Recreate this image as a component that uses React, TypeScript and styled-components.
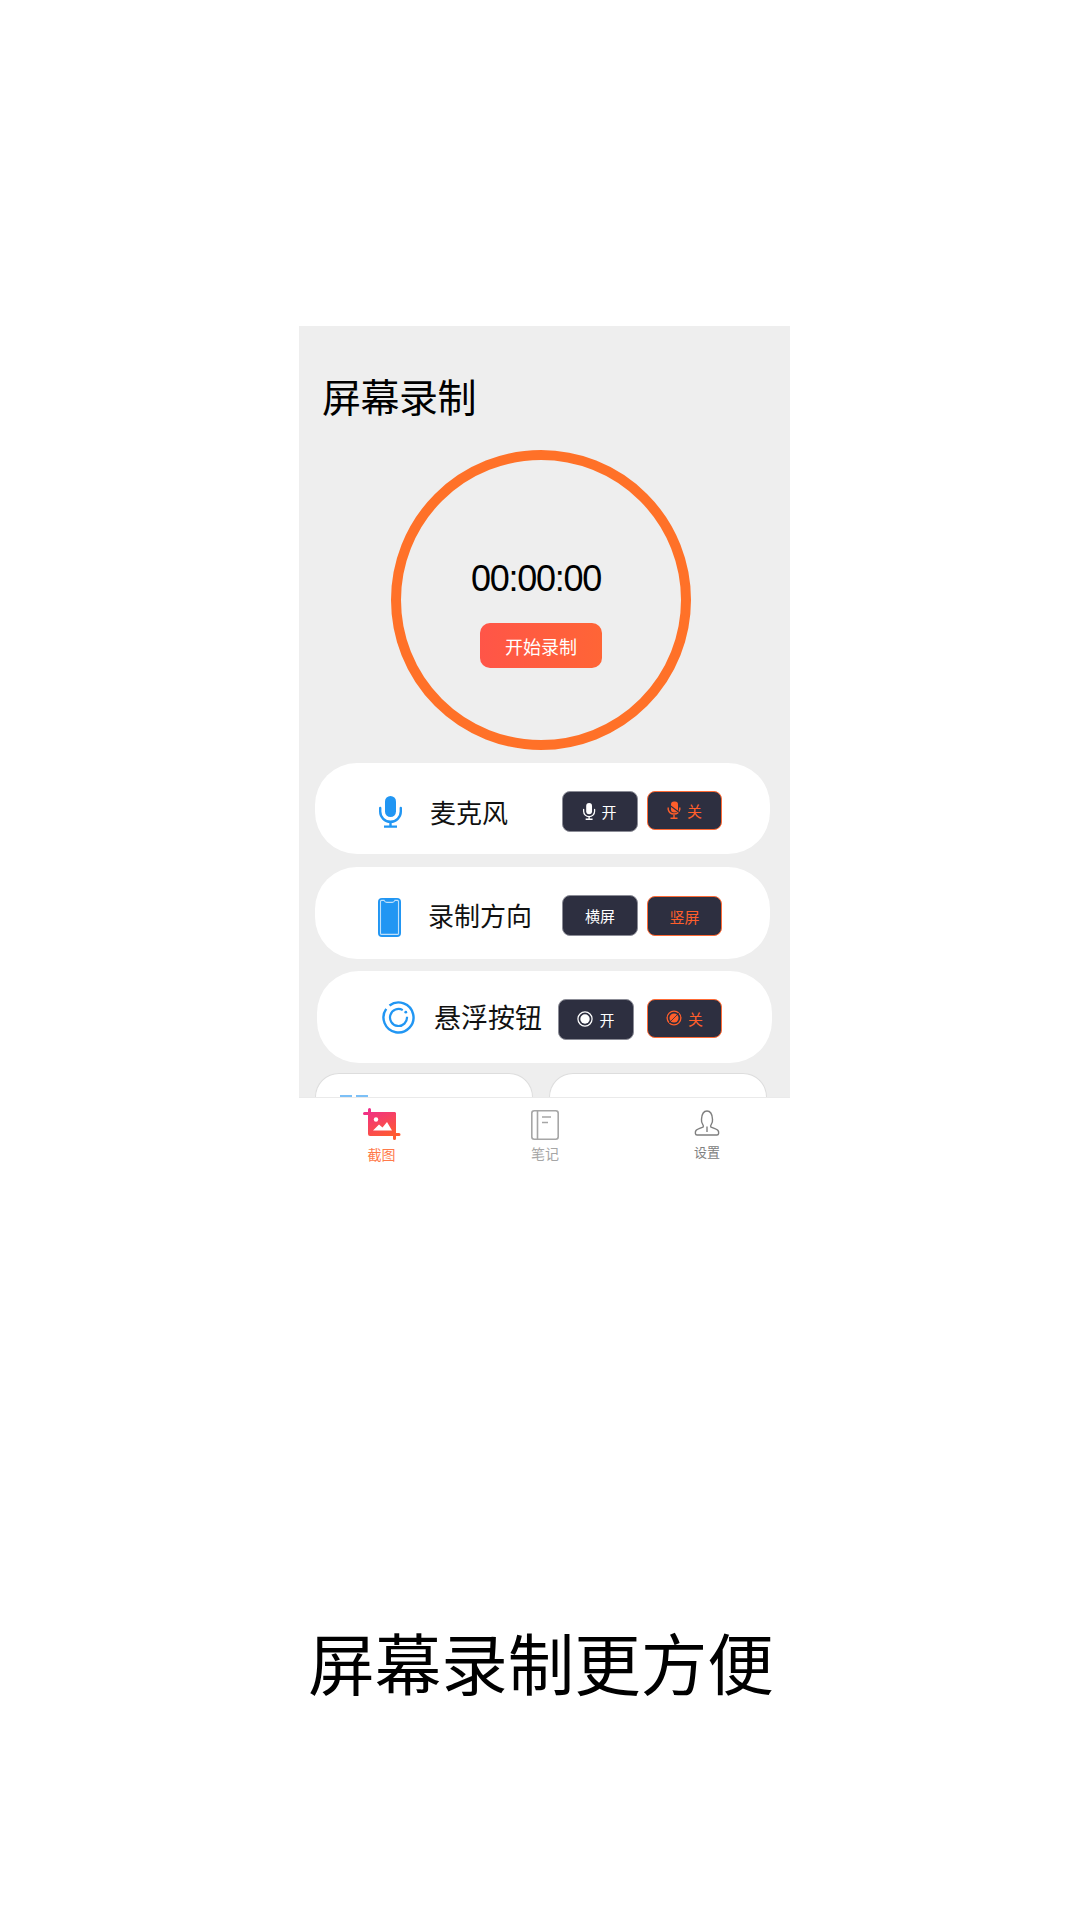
import React from "react";
import styled, { createGlobalStyle } from "styled-components";

const GlobalStyle = createGlobalStyle`
  html, body {
    margin: 0;
    padding: 0;
    background: #fff;
    font-family: "Liberation Sans", "Noto Sans CJK SC", sans-serif;
  }
`;

const Page = styled.div`
  width: 1080px;
  height: 1920px;
  padding: 326px 0 0 299px;
  box-sizing: border-box;
  display: flex;
  flex-direction: column;
  position: relative;
`;

const Phone = styled.div`
  width: 491px;
  display: flex;
  flex-direction: column;
`;

const Content = styled.div`
  height: 771px;
  background: #eee;
  overflow: hidden;
  display: flex;
  flex-direction: column;

  & > * {
    flex-shrink: 0;
  }
`;

const Title = styled.h1`
  margin: 41px 0 0 23px;
  font-size: 39px;
  line-height: 56px;
  font-weight: 400;
  color: #000;
  font-family: "Noto Sans CJK SC", sans-serif;
  letter-spacing: -0.5px;
`;

const Ring = styled.div`
  width: 300px;
  height: 300px;
  margin: 27px 0 0 92px;
  border: 10px solid #ff7128;
  border-radius: 50%;
  box-sizing: border-box;
  display: flex;
  flex-direction: column;
  align-items: center;
`;

const Time = styled.div`
  margin: 99px 10px 0 0;
  font-size: 36px;
  line-height: 40px;
  color: #000;
  letter-spacing: -1.25px;
`;

const StartButton = styled.div`
  width: 122px;
  height: 45px;
  margin-top: 24px;
  border-radius: 10px;
  background: linear-gradient(90deg, #ff5548, #ff6536);
  color: #fff;
  font-size: 18px;
  font-family: "Noto Sans CJK SC", sans-serif;
  display: flex;
  align-items: center;
  justify-content: center;
`;

const Rows = styled.div`
  display: flex;
  flex-direction: column;
  margin-top: 13px;
`;

const Row = styled.div<{ $left: number; $top: number; $height: number; $pad: number; $after: number; $right: number }>`
  width: 455px;
  height: ${(p) => p.$height}px;
  margin: 0 0 ${(p) => p.$after}px ${(p) => p.$left}px;
  padding: ${(p) => p.$top}px ${(p) => p.$right}px 0 ${(p) => p.$pad}px;
  box-sizing: border-box;
  background: #fff;
  border-radius: 42px;
  display: flex;
  align-items: center;
`;

const RowIcon = styled.div<{ $width: number }>`
  width: ${(p) => p.$width}px;
  display: flex;
  justify-content: center;
  flex-shrink: 0;
`;

const RowLabel = styled.div<{ $size: number; $gap: number; $lift?: number }>`
  margin-left: ${(p) => p.$gap}px;
  margin-bottom: ${(p) => p.$lift ?? 0}px;
  font-size: ${(p) => p.$size}px;
  line-height: 36px;
  color: #111;
  font-family: "Noto Sans CJK SC", sans-serif;
  white-space: nowrap;
`;

const Toggles = styled.div<{ $gap: number; $shift: number }>`
  margin-left: auto;
  display: flex;
  align-items: flex-start;
  gap: ${(p) => p.$gap}px;
  transform: translateY(${(p) => p.$shift}px);
`;

const Toggle = styled.div<{ $off?: boolean; $tall?: boolean }>`
  width: ${(p) => (p.$off ? 75 : 76)}px;
  height: ${(p) => (p.$off ? (p.$tall ? 40 : 39) : 41)}px;
  margin-top: ${(p) => (p.$tall ? 1 : 0)}px;
  box-sizing: border-box;
  border-radius: 8px;
  background: #2d2f40;
  border: 1px solid ${(p) => (p.$off ? "#ff6a35" : "#8b8c96")};
  color: ${(p) => (p.$off ? "#ff5e2b" : "#fff")};
  font-size: 15px;
  font-family: "Noto Sans CJK SC", sans-serif;
  display: flex;
  align-items: center;
  justify-content: center;
  gap: 6px;
`;

const Cards = styled.div`
  display: flex;
  gap: 16px;
  margin: 10px 0 0 16px;
`;

const Card = styled.div`
  width: 218px;
  height: 120px;
  box-sizing: border-box;
  background: #fff;
  border: 1px solid #ddd;
  border-bottom: 0;
  border-radius: 24px 24px 0 0;
  padding: 21px 0 0 24px;
  display: flex;
  gap: 4px;
  align-items: flex-start;
`;

const CardMark = styled.span`
  width: 12px;
  height: 3px;
  background: #7cc0f7;
`;

const TabBar = styled.div`
  height: 76px;
  background: #fff;
  border-top: 1px solid #eaeaea;
  box-sizing: border-box;
  display: grid;
  grid-template-columns: 165px 162px 162px;
`;

const Tab = styled.div<{ $color: string; $size: number; $top: number; $gap: number }>`
  display: flex;
  flex-direction: column;
  align-items: center;
  padding-top: ${(p) => p.$top}px;
  gap: ${(p) => p.$gap}px;
  color: ${(p) => p.$color};
  font-size: ${(p) => p.$size}px;
  line-height: 18px;
  font-family: "Noto Sans CJK SC", sans-serif;

  svg {
    display: block;
  }
`;

const Caption = styled.div`
  position: absolute;
  left: 2px;
  right: 0;
  top: 1616px;
  text-align: center;
  font-size: 66.5px;
  line-height: 90px;
  color: #000;
  font-family: "Noto Sans CJK SC", sans-serif;
`;

const MicIcon: React.FC<{ size?: number; color: string }> = ({ size = 32, color }) => (
  <svg width={(size * 23) / 32} height={size} viewBox="0 0 23 32" fill="none">
    <rect x="6" y="0" width="11" height="21" rx="5.5" fill={color} />
    <path d="M1.2 12v3.5a10.3 10.3 0 0 0 20.6 0V12" stroke={color} strokeWidth="2.4" strokeLinecap="round" />
    <path d="M11.5 25.5v5M5 30.6h13" stroke={color} strokeWidth="2.4" />
  </svg>
);

const MicOffIcon: React.FC<{ color: string }> = ({ color }) => (
  <svg width="14" height="18" viewBox="0 0 14 18" fill="none">
    <rect x="4" y="0.5" width="7" height="11" rx="3" fill={color} />
    <path d="M1.2 6.5v2a6 6 0 0 0 11.6 0v-2M7 14v3.5M3.5 17.3h7" stroke={color} strokeWidth="1.4" />
    <path d="M1 3l12 9" stroke="#2d2f40" strokeWidth="1.1" />
  </svg>
);

const PhoneIcon: React.FC = () => (
  <svg width="23" height="39" viewBox="0 0 23 39" fill="none">
    <rect x="0" y="0" width="23" height="39" rx="4" fill="#2196f3" />
    <path
      d="M3.5 2.4h2.6c.6 1.4 1.4 2 2.6 2h5.6c1.2 0 2-.6 2.6-2h2.6c.6 0 1 .4 1 1v32c0 .6-.4 1-1 1H3.5c-.6 0-1-.4-1-1v-32c0-.6.4-1 1-1z"
      stroke="#bfe0fb"
      strokeWidth="1.1"
    />
  </svg>
);

const FloatIcon: React.FC = () => (
  <svg width="33" height="33" viewBox="0 0 33 33" fill="none">
    <path d="M7.47 4.52A15 15 0 1 1 4.21 7.9" stroke="#2196f3" strokeWidth="2.4" />
    <path d="M20.75 9.14A8.5 8.5 0 1 0 24.97 15.76" stroke="#2196f3" strokeWidth="2.2" />
    <circle cx="23.8" cy="11.2" r="1.4" fill="#2196f3" />
  </svg>
);

const DotIcon: React.FC = () => (
  <svg width="16" height="16" viewBox="0 0 17 17" fill="none">
    <circle cx="8.5" cy="8.5" r="7.5" stroke="#fff" strokeWidth="1.3" />
    <circle cx="8.5" cy="8.5" r="5" fill="#fff" />
  </svg>
);

const DotOffIcon: React.FC = () => (
  <svg width="16" height="16" viewBox="0 0 17 17" fill="none">
    <circle cx="8.5" cy="8.5" r="7.3" stroke="#ff5e2b" strokeWidth="1.4" />
    <circle cx="8.5" cy="8.5" r="4.8" fill="#ff5e2b" />
    <path d="M1.5 15.5L15.5 1.5" stroke="#2d2f40" strokeWidth="0.9" />
  </svg>
);

const CropIcon: React.FC = () => (
  <svg width="38" height="32" viewBox="0 0 38 32" fill="none">
    <defs>
      <linearGradient id="cropFill" x1="0" y1="0" x2="0.5" y2="1">
        <stop offset="0" stopColor="#ee2a94" />
        <stop offset="1" stopColor="#ff5a30" />
      </linearGradient>
    </defs>
    <path
      d="M5 1.5a1.5 1.5 0 0 1 3 0V4h24a2 2 0 0 1 1 1v20h3a1.5 1.5 0 0 1 0 3h-3v2.5a1.5 1.5 0 0 1-3 0V28H7a2 2 0 0 1-2-2V7H1.5a1.5 1.5 0 0 1 0-3H5z"
      fill="url(#cropFill)"
    />
    <circle cx="13" cy="11.5" r="2.2" fill="#fff" />
    <path d="M10 22.5l6-6 3.5 3 4.5-5.5 5 8.5z" fill="#fff" />
  </svg>
);

const NoteIcon: React.FC = () => (
  <svg width="28" height="30" viewBox="0 0 28 30" fill="none" stroke="#a6a6a6" strokeWidth="1.6">
    <rect x="0.8" y="0.8" width="26.4" height="28.4" rx="2.5" />
    <path d="M6.5 1v28" />
    <path d="M11 7h9M11 12.5h6" />
  </svg>
);

const UserIcon: React.FC = () => (
  <svg width="26" height="26" viewBox="0 0 26 26" fill="none" stroke="#7f7f7f" strokeWidth="1.4">
    <path d="M3 25h20M3 25c-2 0-2-3-1-4.500 1-1.300 3-2 7-3.300.7-.8.5-1.700-.3-2.800C7.700 13 7.300 11.400 7.500 9.200 7.800 4 10 1 13 1s5.200 3 5.500 8.200c.2 2.200-.2 3.800-1.200 5.200-.8 1.100-1 2-.3 2.800 4 1.300 6 2 7 3.300 1 1.500 1 4.500-1 4.500" />
    <path d="M13 16.500V22" />
  </svg>
);

const App: React.FC = () => (
  <Page>
    <GlobalStyle />
    <Phone>
      <Content>
        <Title>屏幕录制</Title>
        <Ring>
          <Time>00:00:00</Time>
          <StartButton>开始录制</StartButton>
        </Ring>
        <Rows>
          <Row $left={16} $top={7} $height={91} $pad={64} $after={13} $right={48}>
            <RowIcon $width={23}>
              <MicIcon color="#2196f3" />
            </RowIcon>
            <RowLabel $size={26} $gap={28}>麦克风</RowLabel>
            <Toggles $gap={9} $shift={-1}>
              <Toggle>
                <MicIcon size={17} color="#fff" />开
              </Toggle>
              <Toggle $off>
                <MicOffIcon color="#ff5e2b" />关
              </Toggle>
            </Toggles>
          </Row>
          <Row $left={16} $top={9} $height={92} $pad={63} $after={12} $right={48}>
            <RowIcon $width={23}>
              <PhoneIcon />
            </RowIcon>
            <RowLabel $size={26} $gap={27} $lift={5}>录制方向</RowLabel>
            <Toggles $gap={9} $shift={-2}>
              <Toggle>横屏</Toggle>
              <Toggle $off $tall>竖屏</Toggle>
            </Toggles>
          </Row>
          <Row $left={18} $top={0} $height={92} $pad={65} $after={0} $right={50}>
            <RowIcon $width={33}>
              <FloatIcon />
            </RowIcon>
            <RowLabel $size={27} $gap={19}>悬浮按钮</RowLabel>
            <Toggles $gap={13} $shift={2}>
              <Toggle>
                <DotIcon />开
              </Toggle>
              <Toggle $off>
                <DotOffIcon />关
              </Toggle>
            </Toggles>
          </Row>
        </Rows>
        <Cards>
          <Card>
            <CardMark />
            <CardMark />
          </Card>
          <Card />
        </Cards>
      </Content>
      <TabBar>
        <Tab $color="#ff7a4a" $size={14} $top={10} $gap={5}>
          <CropIcon />
          截图
        </Tab>
        <Tab $color="#a6a6a6" $size={14} $top={12} $gap={4}>
          <NoteIcon />
          笔记
        </Tab>
        <Tab $color="#808080" $size={13} $top={12} $gap={7}>
          <UserIcon />
          设置
        </Tab>
      </TabBar>
    </Phone>
    <Caption>屏幕录制更方便</Caption>
  </Page>
);

export default App;
